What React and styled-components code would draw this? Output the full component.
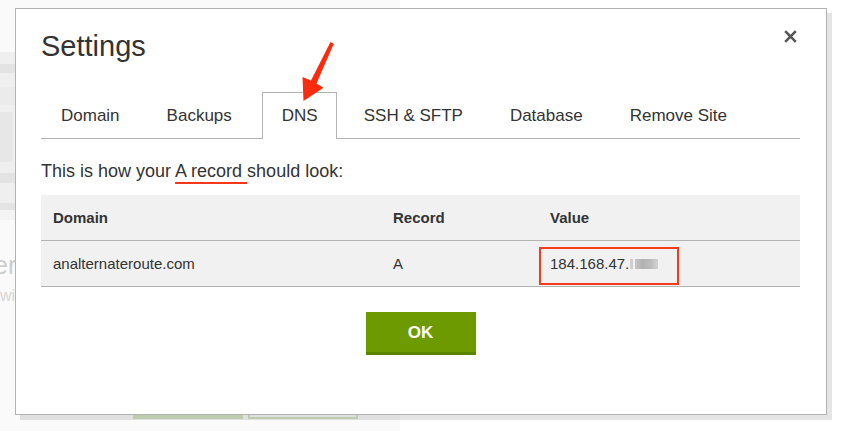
import React from 'react';
import styled, { createGlobalStyle } from 'styled-components';

const GlobalStyle = createGlobalStyle`
  html, body {
    margin: 0;
    padding: 0;
    background: #fff;
  }
  body {
    font-family: "Liberation Sans", Arial, sans-serif;
    color: #333;
  }
`;

const Page = styled.div`
  position: relative;
  width: 851px;
  height: 431px;
  overflow: hidden;
  background: #fff;
`;

// the page behind the modal
const Backdrop = styled.div`
  width: 400px;
  height: 100%;
  background: #fafafa;
  display: flex;
  flex-direction: column;
  padding-top: 52px;
  box-sizing: border-box;
`;

const Stripe = styled.div`
  height: ${(p) => p.$h}px;
  background: ${(p) => p.$c};
  flex-shrink: 0;
`;

const StripeBlock = styled.div`
  width: 13px;
  height: 100%;
  background: #e7e7e7;
`;

const BgHeading = styled.div`
  margin: 32px 0 0 -6px;
  font-size: 25px;
  line-height: 26px;
  color: #cdcdcd;
`;

const BgText = styled.div`
  margin-top: 8px;
  font-size: 16px;
  line-height: 20px;
  color: #d6d6d6;
`;

const BgActions = styled.div`
  margin-top: auto;
  margin-bottom: 11px;
  padding-left: 133px;
  display: flex;
  gap: 5px;
`;

const BgButton = styled.div`
  width: 110px;
  height: 30px;
  box-sizing: border-box;
  background: ${(p) => (p.$outline ? 'transparent' : '#d5e2c2')};
  border: ${(p) => (p.$outline ? '2px solid #d5e2c2' : 'none')};
  margin-bottom: ${(p) => (p.$outline ? 1 : 0)}px;
`;

const Dialog = styled.div`
  position: absolute;
  left: 15px;
  top: 8px;
  width: 812px;
  height: 407px;
  box-sizing: border-box;
  border: 1px solid #b3b3b3;
  background: #fff;
  box-shadow: 5px 5px 0 rgba(0, 0, 0, 0.1);
  padding: 23px 26px 0 25px;
`;

const Header = styled.div`
  display: flex;
  justify-content: space-between;
  align-items: flex-start;
`;

const Title = styled.h1`
  margin: 0;
  font-size: 29px;
  line-height: 29px;
  font-weight: 400;
  color: #333;
`;

const CloseButton = styled.button`
  margin: -2px 3px 0 0;
  padding: 0;
  border: none;
  background: none;
  width: 13px;
  height: 13px;
  display: flex;
  cursor: pointer;
`;

const TabBar = styled.div`
  margin-top: 31px;
  height: 46px;
  display: flex;
  gap: 7px;
  border-bottom: 1px solid #b3b3b3;
`;

const Tab = styled.div`
  height: 47px;
  box-sizing: border-box;
  padding: 0 ${(p) => (p.$active ? 18 : 19)}px 0 19px;
  margin-left: ${(p) => (p.$active ? 3 : 0)}px;
  display: flex;
  align-items: center;
  font-size: 17px;
  color: #333;
  border: 1px solid ${(p) => (p.$active ? '#b3b3b3' : 'transparent')};
  border-bottom: none;
  background: ${(p) => (p.$active ? '#fff' : 'transparent')};
  margin-bottom: -1px;
`;

const Intro = styled.p`
  margin: 22px 0 0;
  font-size: 18px;
  line-height: 20px;
  color: #333;
`;

const Mark = styled.span`
  text-decoration: underline;
  text-decoration-color: #f5381b;
  text-decoration-thickness: 2px;
  text-underline-offset: 5px;
`;

const Table = styled.div`
  margin-top: 14px;
  display: grid;
  grid-template-columns: 340px 157px 1fr;
`;

const Row = styled.div`
  display: contents;
`;

const Cell = styled.div`
  height: 45px;
  background: #f1f1f1;
  border-bottom: 1px solid #b4b4b4;
  padding-left: 12px;
  display: flex;
  align-items: center;
  font-size: 15px;
  font-weight: ${(p) => (p.$head ? 700 : 400)};
  color: #333;
`;

const ValueCell = styled(Cell)`
  padding-left: 1px;
  align-items: flex-end;
  padding-bottom: 1px;
  box-sizing: border-box;
  height: 46px;
`;

const Highlight = styled.div`
  width: 140px;
  height: 38px;
  box-sizing: border-box;
  border: 2px solid #f33c1e;
  padding: 0 0 5px 9px;
  display: flex;
  align-items: center;
`;

const Redacted = styled.span`
  display: inline-block;
  width: 28px;
  height: 10px;
  margin-left: 1px;
  background: linear-gradient(
    90deg,
    #cfcfcf 0 3px,
    #f1f1f1 3px 5px,
    #c6c6c6 5px,
    #b2b2b2 45%,
    #bdbdbd 75%,
    #d2d2d2 100%
  );
  filter: blur(0.5px);
`;

const Footer = styled.div`
  display: flex;
  justify-content: center;
  margin-top: 25px;
`;

const OkButton = styled.button`
  width: 110px;
  height: 43px;
  box-sizing: border-box;
  border: none;
  border-bottom: 3px solid #5b8400;
  background: #6d9a00;
  color: #fff;
  font-family: "Liberation Sans", Arial, sans-serif;
  font-size: 17px;
  font-weight: 700;
  padding: 2px 0 0;
  cursor: pointer;
`;

// red annotation arrow over the DNS tab
const Arrow = styled.svg`
  position: absolute;
  left: 295px;
  top: 38px;
  width: 45px;
  height: 68px;
  pointer-events: none;
`;

const tabs = ['Domain', 'Backups', 'DNS', 'SSH & SFTP', 'Database', 'Remove Site'];

const App = () => {
  return (
    <Page>
      <GlobalStyle />
      <Backdrop>
        <Stripe $h={12} $c="#efefef" />
        <Stripe $h={9} $c="#e3e3e3" />
        <Stripe $h={14} $c="#efefef" />
        <Stripe $h={18} $c="#ebebeb" />
        <Stripe $h={7} $c="#efefef" />
        <Stripe $h={50} $c="#efefef">
          <StripeBlock />
        </Stripe>
        <Stripe $h={11} $c="#efefef" />
        <Stripe $h={10} $c="#e3e3e3" />
        <Stripe $h={20} $c="#efefef" />
        <Stripe $h={7} $c="#e4e4e4" />
        <Stripe $h={10} $c="#f4f4f4" />
        <BgHeading>er</BgHeading>
        <BgText>wi</BgText>
        <BgActions>
          <BgButton />
          <BgButton $outline />
        </BgActions>
      </Backdrop>

      <Dialog>
        <Header>
          <Title>Settings</Title>
          <CloseButton aria-label="Close">
            <svg width="13" height="13" viewBox="0 0 13 13">
              <path d="M1.2 1.2 L11.8 11.8 M11.8 1.2 L1.2 11.8" stroke="#555" strokeWidth="2.6" />
            </svg>
          </CloseButton>
        </Header>

        <TabBar>
          {tabs.map((t) => (
            <Tab key={t} $active={t === 'DNS'}>
              {t}
            </Tab>
          ))}
        </TabBar>

        <Intro>
          This is how your <Mark>A record </Mark>should look:
        </Intro>

        <Table>
          <Row>
            <Cell $head>Domain</Cell>
            <Cell $head>Record</Cell>
            <Cell $head>Value</Cell>
          </Row>
          <Row>
            <Cell>analternateroute.com</Cell>
            <Cell>A</Cell>
            <ValueCell>
              <Highlight>
                184.168.47.
                <Redacted />
              </Highlight>
            </ValueCell>
          </Row>
        </Table>

        <Footer>
          <OkButton>OK</OkButton>
        </Footer>
      </Dialog>

      <Arrow viewBox="295 38 45 68">
        <polygon
          points="330.5,42 333.8,43.8 316.5,83.5 323.5,87.8 303.5,101 302.5,77 311,80.5"
          fill="#fb2c0e"
        />
      </Arrow>
    </Page>
  );
};

export default App;
